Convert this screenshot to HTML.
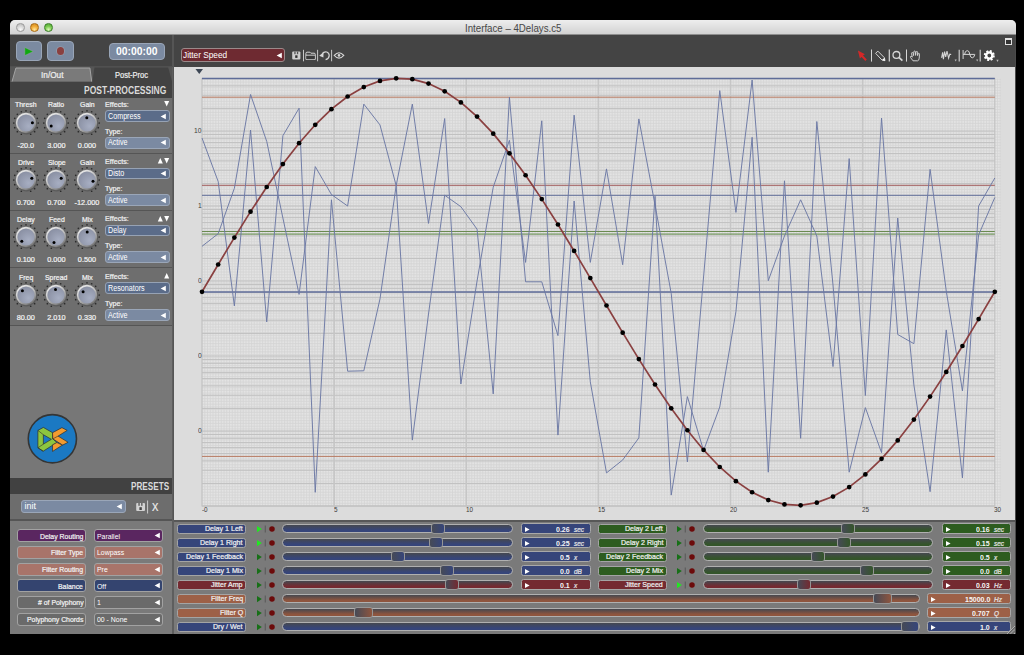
<!DOCTYPE html>
<html><head><meta charset="utf-8">
<style>
*{margin:0;padding:0;box-sizing:border-box}
html,body{width:1024px;height:655px;overflow:hidden;background:#000;font-family:"Liberation Sans", sans-serif}
.a{position:absolute}
.t{position:absolute;white-space:nowrap;line-height:1}
.b{-webkit-text-stroke:0.22px currentColor}
svg{position:absolute;overflow:visible}
</style></head><body>

<div class="a" style="left:10.00px;top:20.00px;width:1006.00px;height:614.00px;background:#7a7a7a;border-radius:5px 5px 0 0"></div>
<div class="a" style="left:10.00px;top:20.00px;width:1006.00px;height:15.00px;background:linear-gradient(#eeeeee,#d0d0d0);border-radius:5px 5px 0 0"></div>
<div class="a" style="left:10.00px;top:34.00px;width:1006.00px;height:1.00px;background:#8e8e8e"></div>
<div class="a" style="left:16.00px;top:23.40px;width:8.80px;height:8.80px;border-radius:50%;border:0.9px solid #9a9a9a;background:radial-gradient(circle at 50% 80%,#fafafa,#d8d8d8 50%,#b8b8b8 100%)"></div>
<div class="a" style="left:30.00px;top:23.40px;width:8.80px;height:8.80px;border-radius:50%;border:0.9px solid #a96a14;background:radial-gradient(circle at 50% 80%,#ffe79a,#f0aa35 50%,#d08a20 100%)"></div>
<div class="a" style="left:44.00px;top:23.40px;width:8.80px;height:8.80px;border-radius:50%;border:0.9px solid #3a7f28;background:radial-gradient(circle at 50% 80%,#dcf8b8,#7acb50 50%,#4fa035 100%)"></div>
<div class="t" style="left:464.70px;top:23.39px;font-size:11px;color:#474747;transform:scaleX(0.881);transform-origin:0 0;">Interface – 4Delays.c5</div>
<div class="a" style="left:10.00px;top:35.00px;width:1006.00px;height:32.00px;background:#444444"></div>
<div class="a" style="left:172.00px;top:35.00px;width:1.50px;height:32.00px;background:#555"></div>
<div class="a" style="left:16.00px;top:41.00px;width:26.00px;height:20.00px;background:#7b8aa1;border:1px solid #99a5b7;border-radius:4px"></div>
<svg style="left:24px;top:46px" width="12" height="11"><polygon points="0.8,1.4 9.2,5.5 0.8,9.6" fill="#10a810" stroke="#95a7a0" stroke-width="0.5"/></svg>
<div class="a" style="left:47.00px;top:41.00px;width:27.00px;height:20.00px;background:#7b8aa1;border:1px solid #99a5b7;border-radius:4px"></div>
<div class="a" style="left:56.60px;top:47.20px;width:7.40px;height:7.40px;background:#8a4040;border-radius:50%;box-shadow:0 0 0 0.6px #9aa2b0"></div>
<div class="a" style="left:109.00px;top:42.50px;width:56.00px;height:17.00px;background:#7b8aa1;border:1px solid #99a5b7;border-radius:4px"></div>
<div class="t" style="left:116.30px;top:46.21px;font-size:10.5px;color:#fff;font-weight:bold;transform:scaleX(0.987);transform-origin:0 0;">00:00:00</div>
<div class="a" style="left:10.00px;top:67.00px;width:163.00px;height:453.00px;background:#777777"></div>
<div class="a" style="left:10.00px;top:66.00px;width:163.00px;height:1.00px;background:#505050"></div>
<div class="a" style="left:10.00px;top:67.00px;width:162.00px;height:15.00px;background:#555555"></div>
<svg style="left:10px;top:67px" width="163" height="16"><polygon points="2,14.6 5.9,1 79.9,1 81.7,14.6" fill="#7a7a7a"/><path d="M2,14.6 5.9,1 79.9,1 81.7,14.6" fill="none" stroke="#a4a4a4" stroke-width="1"/><polygon points="84.5,0.6 158.2,0.6 162.2,15 82.3,15" fill="#424242"/></svg>
<div class="a" style="left:10.00px;top:81.50px;width:162.00px;height:16.00px;background:#424242"></div>
<div class="t b" style="left:40.70px;top:71.05px;font-size:8.8px;color:#eeeeee;transform:scaleX(0.939);transform-origin:0 0;">In/Out</div>
<div class="t b" style="left:115.00px;top:71.05px;font-size:8.8px;color:#eeeeee;transform:scaleX(0.854);transform-origin:0 0;">Post-Proc</div>
<div class="t" style="left:84.20px;top:84.82px;font-size:11.2px;color:#dadada;font-weight:bold;transform:scaleX(0.761);transform-origin:0 0;">POST-PROCESSING</div>
<svg width="0" height="0" style="left:0;top:0"><defs><radialGradient id="kg" cx="0.65" cy="0.68" r="0.8"><stop offset="0" stop-color="#a7aec2"/><stop offset="1" stop-color="#868c9f"/></radialGradient><linearGradient id="kr" x1="0.25" y1="0.1" x2="0.75" y2="0.9"><stop offset="0" stop-color="#e6e6e6"/><stop offset="0.5" stop-color="#bdbdbd"/><stop offset="1" stop-color="#7a7a7a"/></linearGradient></defs></svg>
<div class="a" style="left:10.00px;top:97.50px;width:162.00px;height:55.00px;background:#6e6e6e"></div>
<div class="a" style="left:10.00px;top:152.50px;width:162.00px;height:1.50px;background:#555"></div>
<div class="t b" style="left:15.01px;top:101.22px;font-size:7.3px;color:#f2f2f2;transform:scaleX(0.950);transform-origin:0 0;">Thresh</div>
<svg style="left:11.80px;top:108.60px" width="28" height="28" viewBox="-14 -14 28 28"><circle cx="0.00" cy="-12.20" r="0.85" fill="#2c2c2c"/><circle cx="4.67" cy="-11.27" r="0.85" fill="#2c2c2c"/><circle cx="8.63" cy="-8.63" r="0.85" fill="#2c2c2c"/><circle cx="11.27" cy="-4.67" r="0.85" fill="#2c2c2c"/><circle cx="12.20" cy="-0.00" r="0.85" fill="#2c2c2c"/><circle cx="11.27" cy="4.67" r="0.85" fill="#2c2c2c"/><circle cx="8.63" cy="8.63" r="0.85" fill="#2c2c2c"/><circle cx="4.67" cy="11.27" r="0.85" fill="#2c2c2c"/><circle cx="-4.67" cy="11.27" r="0.85" fill="#2c2c2c"/><circle cx="-8.63" cy="8.63" r="0.85" fill="#2c2c2c"/><circle cx="-11.27" cy="4.67" r="0.85" fill="#2c2c2c"/><circle cx="-12.20" cy="0.00" r="0.85" fill="#2c2c2c"/><circle cx="-11.27" cy="-4.67" r="0.85" fill="#2c2c2c"/><circle cx="-8.63" cy="-8.63" r="0.85" fill="#2c2c2c"/><circle cx="-4.67" cy="-11.27" r="0.85" fill="#2c2c2c"/><circle cx="0.4" cy="0.7" r="10.7" fill="#3a3a3a" opacity="0.35"/><circle cx="0" cy="0" r="10.2" fill="url(#kr)"/><circle cx="0" cy="0" r="8.6" fill="url(#kg)"/><circle cx="6.40" cy="-0.30" r="1.5" fill="#000"/></svg>
<div class="t b" style="left:17.48px;top:141.92px;font-size:7.3px;color:#f2f2f2;">-20.0</div>
<div class="t b" style="left:48.31px;top:101.22px;font-size:7.3px;color:#f2f2f2;transform:scaleX(0.950);transform-origin:0 0;">Ratio</div>
<svg style="left:42.40px;top:108.60px" width="28" height="28" viewBox="-14 -14 28 28"><circle cx="0.00" cy="-12.20" r="0.85" fill="#2c2c2c"/><circle cx="4.67" cy="-11.27" r="0.85" fill="#2c2c2c"/><circle cx="8.63" cy="-8.63" r="0.85" fill="#2c2c2c"/><circle cx="11.27" cy="-4.67" r="0.85" fill="#2c2c2c"/><circle cx="12.20" cy="-0.00" r="0.85" fill="#2c2c2c"/><circle cx="11.27" cy="4.67" r="0.85" fill="#2c2c2c"/><circle cx="8.63" cy="8.63" r="0.85" fill="#2c2c2c"/><circle cx="4.67" cy="11.27" r="0.85" fill="#2c2c2c"/><circle cx="-4.67" cy="11.27" r="0.85" fill="#2c2c2c"/><circle cx="-8.63" cy="8.63" r="0.85" fill="#2c2c2c"/><circle cx="-11.27" cy="4.67" r="0.85" fill="#2c2c2c"/><circle cx="-12.20" cy="0.00" r="0.85" fill="#2c2c2c"/><circle cx="-11.27" cy="-4.67" r="0.85" fill="#2c2c2c"/><circle cx="-8.63" cy="-8.63" r="0.85" fill="#2c2c2c"/><circle cx="-4.67" cy="-11.27" r="0.85" fill="#2c2c2c"/><circle cx="0.4" cy="0.7" r="10.7" fill="#3a3a3a" opacity="0.35"/><circle cx="0" cy="0" r="10.2" fill="url(#kr)"/><circle cx="0" cy="0" r="8.6" fill="url(#kg)"/><circle cx="-4.80" cy="3.00" r="1.5" fill="#000"/></svg>
<div class="t b" style="left:47.27px;top:141.92px;font-size:7.3px;color:#f2f2f2;">3.000</div>
<div class="t b" style="left:79.68px;top:101.22px;font-size:7.3px;color:#f2f2f2;transform:scaleX(0.950);transform-origin:0 0;">Gain</div>
<svg style="left:73.00px;top:108.60px" width="28" height="28" viewBox="-14 -14 28 28"><circle cx="0.00" cy="-12.20" r="0.85" fill="#2c2c2c"/><circle cx="4.67" cy="-11.27" r="0.85" fill="#2c2c2c"/><circle cx="8.63" cy="-8.63" r="0.85" fill="#2c2c2c"/><circle cx="11.27" cy="-4.67" r="0.85" fill="#2c2c2c"/><circle cx="12.20" cy="-0.00" r="0.85" fill="#2c2c2c"/><circle cx="11.27" cy="4.67" r="0.85" fill="#2c2c2c"/><circle cx="8.63" cy="8.63" r="0.85" fill="#2c2c2c"/><circle cx="4.67" cy="11.27" r="0.85" fill="#2c2c2c"/><circle cx="-4.67" cy="11.27" r="0.85" fill="#2c2c2c"/><circle cx="-8.63" cy="8.63" r="0.85" fill="#2c2c2c"/><circle cx="-11.27" cy="4.67" r="0.85" fill="#2c2c2c"/><circle cx="-12.20" cy="0.00" r="0.85" fill="#2c2c2c"/><circle cx="-11.27" cy="-4.67" r="0.85" fill="#2c2c2c"/><circle cx="-8.63" cy="-8.63" r="0.85" fill="#2c2c2c"/><circle cx="-4.67" cy="-11.27" r="0.85" fill="#2c2c2c"/><circle cx="0.4" cy="0.7" r="10.7" fill="#3a3a3a" opacity="0.35"/><circle cx="0" cy="0" r="10.2" fill="url(#kr)"/><circle cx="0" cy="0" r="8.6" fill="url(#kg)"/><circle cx="-0.20" cy="-5.30" r="1.5" fill="#000"/></svg>
<div class="t b" style="left:77.87px;top:141.92px;font-size:7.3px;color:#f2f2f2;">0.000</div>
<div class="t b" style="left:105.20px;top:100.90px;font-size:7.8px;color:#f2f2f2;transform:scaleX(0.920);transform-origin:0 0;">Effects:</div>
<div class="t b" style="left:105.20px;top:127.50px;font-size:7.8px;color:#f2f2f2;transform:scaleX(0.920);transform-origin:0 0;">Type:</div>
<div class="a" style="left:105.20px;top:110.10px;width:64.60px;height:11.80px;background:#5b6c89;border:1px solid #96a2b4;border-radius:3px"></div>
<div class="t" style="left:108.40px;top:111.81px;font-size:9.2px;color:#fff;transform:scaleX(0.780);transform-origin:0 0;">Compress</div>
<svg style="left:160.30px;top:112.50px" width="7" height="7"><polygon points="5.8,0.8 5.8,6.2 0.6,3.5" fill="#fff"/></svg>
<div class="a" style="left:105.20px;top:136.60px;width:64.60px;height:12.20px;background:#7b8aa2;border:1px solid #9aa6b8;border-radius:3px"></div>
<div class="t" style="left:108.40px;top:138.31px;font-size:9.2px;color:#fff;transform:scaleX(0.780);transform-origin:0 0;">Active</div>
<svg style="left:160.30px;top:139.20px" width="7" height="7"><polygon points="5.8,0.8 5.8,6.2 0.6,3.5" fill="#fff"/></svg>
<svg style="left:155px;top:100.00px" width="16" height="8"><polygon points="9.2,1 14.2,1 11.7,6.5" fill="#fff"/></svg>
<div class="a" style="left:10.00px;top:153.50px;width:162.00px;height:56.50px;background:#6e6e6e"></div>
<div class="a" style="left:10.00px;top:210.00px;width:162.00px;height:1.50px;background:#555"></div>
<div class="t b" style="left:17.71px;top:158.62px;font-size:7.3px;color:#f2f2f2;transform:scaleX(0.950);transform-origin:0 0;">Drive</div>
<svg style="left:11.80px;top:166.00px" width="28" height="28" viewBox="-14 -14 28 28"><circle cx="0.00" cy="-12.20" r="0.85" fill="#2c2c2c"/><circle cx="4.67" cy="-11.27" r="0.85" fill="#2c2c2c"/><circle cx="8.63" cy="-8.63" r="0.85" fill="#2c2c2c"/><circle cx="11.27" cy="-4.67" r="0.85" fill="#2c2c2c"/><circle cx="12.20" cy="-0.00" r="0.85" fill="#2c2c2c"/><circle cx="11.27" cy="4.67" r="0.85" fill="#2c2c2c"/><circle cx="8.63" cy="8.63" r="0.85" fill="#2c2c2c"/><circle cx="4.67" cy="11.27" r="0.85" fill="#2c2c2c"/><circle cx="-4.67" cy="11.27" r="0.85" fill="#2c2c2c"/><circle cx="-8.63" cy="8.63" r="0.85" fill="#2c2c2c"/><circle cx="-11.27" cy="4.67" r="0.85" fill="#2c2c2c"/><circle cx="-12.20" cy="0.00" r="0.85" fill="#2c2c2c"/><circle cx="-11.27" cy="-4.67" r="0.85" fill="#2c2c2c"/><circle cx="-8.63" cy="-8.63" r="0.85" fill="#2c2c2c"/><circle cx="-4.67" cy="-11.27" r="0.85" fill="#2c2c2c"/><circle cx="0.4" cy="0.7" r="10.7" fill="#3a3a3a" opacity="0.35"/><circle cx="0" cy="0" r="10.2" fill="url(#kr)"/><circle cx="0" cy="0" r="8.6" fill="url(#kg)"/><circle cx="5.80" cy="-1.70" r="1.5" fill="#000"/></svg>
<div class="t b" style="left:16.67px;top:199.32px;font-size:7.3px;color:#f2f2f2;">0.700</div>
<div class="t b" style="left:47.53px;top:158.62px;font-size:7.3px;color:#f2f2f2;transform:scaleX(0.950);transform-origin:0 0;">Slope</div>
<svg style="left:42.40px;top:166.00px" width="28" height="28" viewBox="-14 -14 28 28"><circle cx="0.00" cy="-12.20" r="0.85" fill="#2c2c2c"/><circle cx="4.67" cy="-11.27" r="0.85" fill="#2c2c2c"/><circle cx="8.63" cy="-8.63" r="0.85" fill="#2c2c2c"/><circle cx="11.27" cy="-4.67" r="0.85" fill="#2c2c2c"/><circle cx="12.20" cy="-0.00" r="0.85" fill="#2c2c2c"/><circle cx="11.27" cy="4.67" r="0.85" fill="#2c2c2c"/><circle cx="8.63" cy="8.63" r="0.85" fill="#2c2c2c"/><circle cx="4.67" cy="11.27" r="0.85" fill="#2c2c2c"/><circle cx="-4.67" cy="11.27" r="0.85" fill="#2c2c2c"/><circle cx="-8.63" cy="8.63" r="0.85" fill="#2c2c2c"/><circle cx="-11.27" cy="4.67" r="0.85" fill="#2c2c2c"/><circle cx="-12.20" cy="0.00" r="0.85" fill="#2c2c2c"/><circle cx="-11.27" cy="-4.67" r="0.85" fill="#2c2c2c"/><circle cx="-8.63" cy="-8.63" r="0.85" fill="#2c2c2c"/><circle cx="-4.67" cy="-11.27" r="0.85" fill="#2c2c2c"/><circle cx="0.4" cy="0.7" r="10.7" fill="#3a3a3a" opacity="0.35"/><circle cx="0" cy="0" r="10.2" fill="url(#kr)"/><circle cx="0" cy="0" r="8.6" fill="url(#kg)"/><circle cx="5.20" cy="-1.70" r="1.5" fill="#000"/></svg>
<div class="t b" style="left:47.27px;top:199.32px;font-size:7.3px;color:#f2f2f2;">0.700</div>
<div class="t b" style="left:79.68px;top:158.62px;font-size:7.3px;color:#f2f2f2;transform:scaleX(0.950);transform-origin:0 0;">Gain</div>
<svg style="left:73.00px;top:166.00px" width="28" height="28" viewBox="-14 -14 28 28"><circle cx="0.00" cy="-12.20" r="0.85" fill="#2c2c2c"/><circle cx="4.67" cy="-11.27" r="0.85" fill="#2c2c2c"/><circle cx="8.63" cy="-8.63" r="0.85" fill="#2c2c2c"/><circle cx="11.27" cy="-4.67" r="0.85" fill="#2c2c2c"/><circle cx="12.20" cy="-0.00" r="0.85" fill="#2c2c2c"/><circle cx="11.27" cy="4.67" r="0.85" fill="#2c2c2c"/><circle cx="8.63" cy="8.63" r="0.85" fill="#2c2c2c"/><circle cx="4.67" cy="11.27" r="0.85" fill="#2c2c2c"/><circle cx="-4.67" cy="11.27" r="0.85" fill="#2c2c2c"/><circle cx="-8.63" cy="8.63" r="0.85" fill="#2c2c2c"/><circle cx="-11.27" cy="4.67" r="0.85" fill="#2c2c2c"/><circle cx="-12.20" cy="0.00" r="0.85" fill="#2c2c2c"/><circle cx="-11.27" cy="-4.67" r="0.85" fill="#2c2c2c"/><circle cx="-8.63" cy="-8.63" r="0.85" fill="#2c2c2c"/><circle cx="-4.67" cy="-11.27" r="0.85" fill="#2c2c2c"/><circle cx="0.4" cy="0.7" r="10.7" fill="#3a3a3a" opacity="0.35"/><circle cx="0" cy="0" r="10.2" fill="url(#kr)"/><circle cx="0" cy="0" r="8.6" fill="url(#kg)"/><circle cx="6.00" cy="1.20" r="1.5" fill="#000"/></svg>
<div class="t b" style="left:74.62px;top:199.32px;font-size:7.3px;color:#f2f2f2;">-12.000</div>
<div class="t b" style="left:105.20px;top:158.30px;font-size:7.8px;color:#f2f2f2;transform:scaleX(0.920);transform-origin:0 0;">Effects:</div>
<div class="t b" style="left:105.20px;top:184.90px;font-size:7.8px;color:#f2f2f2;transform:scaleX(0.920);transform-origin:0 0;">Type:</div>
<div class="a" style="left:105.20px;top:167.50px;width:64.60px;height:11.80px;background:#5b6c89;border:1px solid #96a2b4;border-radius:3px"></div>
<div class="t" style="left:108.40px;top:169.21px;font-size:9.2px;color:#fff;transform:scaleX(0.780);transform-origin:0 0;">Disto</div>
<svg style="left:160.30px;top:169.90px" width="7" height="7"><polygon points="5.8,0.8 5.8,6.2 0.6,3.5" fill="#fff"/></svg>
<div class="a" style="left:105.20px;top:194.00px;width:64.60px;height:12.20px;background:#7b8aa2;border:1px solid #9aa6b8;border-radius:3px"></div>
<div class="t" style="left:108.40px;top:195.71px;font-size:9.2px;color:#fff;transform:scaleX(0.780);transform-origin:0 0;">Active</div>
<svg style="left:160.30px;top:196.60px" width="7" height="7"><polygon points="5.8,0.8 5.8,6.2 0.6,3.5" fill="#fff"/></svg>
<svg style="left:155px;top:157.40px" width="16" height="8"><polygon points="9.2,1 14.2,1 11.7,6.5" fill="#fff"/><polygon points="2.8,6.5 7.8,6.5 5.3,1" fill="#fff"/></svg>
<div class="a" style="left:10.00px;top:211.00px;width:162.00px;height:56.00px;background:#6e6e6e"></div>
<div class="a" style="left:10.00px;top:267.00px;width:162.00px;height:1.50px;background:#555"></div>
<div class="t b" style="left:16.94px;top:215.72px;font-size:7.3px;color:#f2f2f2;transform:scaleX(0.950);transform-origin:0 0;">Delay</div>
<svg style="left:11.80px;top:223.10px" width="28" height="28" viewBox="-14 -14 28 28"><circle cx="0.00" cy="-12.20" r="0.85" fill="#2c2c2c"/><circle cx="4.67" cy="-11.27" r="0.85" fill="#2c2c2c"/><circle cx="8.63" cy="-8.63" r="0.85" fill="#2c2c2c"/><circle cx="11.27" cy="-4.67" r="0.85" fill="#2c2c2c"/><circle cx="12.20" cy="-0.00" r="0.85" fill="#2c2c2c"/><circle cx="11.27" cy="4.67" r="0.85" fill="#2c2c2c"/><circle cx="8.63" cy="8.63" r="0.85" fill="#2c2c2c"/><circle cx="4.67" cy="11.27" r="0.85" fill="#2c2c2c"/><circle cx="-4.67" cy="11.27" r="0.85" fill="#2c2c2c"/><circle cx="-8.63" cy="8.63" r="0.85" fill="#2c2c2c"/><circle cx="-11.27" cy="4.67" r="0.85" fill="#2c2c2c"/><circle cx="-12.20" cy="0.00" r="0.85" fill="#2c2c2c"/><circle cx="-11.27" cy="-4.67" r="0.85" fill="#2c2c2c"/><circle cx="-8.63" cy="-8.63" r="0.85" fill="#2c2c2c"/><circle cx="-4.67" cy="-11.27" r="0.85" fill="#2c2c2c"/><circle cx="0.4" cy="0.7" r="10.7" fill="#3a3a3a" opacity="0.35"/><circle cx="0" cy="0" r="10.2" fill="url(#kr)"/><circle cx="0" cy="0" r="8.6" fill="url(#kg)"/><circle cx="-4.20" cy="4.20" r="1.5" fill="#000"/></svg>
<div class="t b" style="left:16.67px;top:256.42px;font-size:7.3px;color:#f2f2f2;">0.100</div>
<div class="t b" style="left:48.50px;top:215.72px;font-size:7.3px;color:#f2f2f2;transform:scaleX(0.950);transform-origin:0 0;">Feed</div>
<svg style="left:42.40px;top:223.10px" width="28" height="28" viewBox="-14 -14 28 28"><circle cx="0.00" cy="-12.20" r="0.85" fill="#2c2c2c"/><circle cx="4.67" cy="-11.27" r="0.85" fill="#2c2c2c"/><circle cx="8.63" cy="-8.63" r="0.85" fill="#2c2c2c"/><circle cx="11.27" cy="-4.67" r="0.85" fill="#2c2c2c"/><circle cx="12.20" cy="-0.00" r="0.85" fill="#2c2c2c"/><circle cx="11.27" cy="4.67" r="0.85" fill="#2c2c2c"/><circle cx="8.63" cy="8.63" r="0.85" fill="#2c2c2c"/><circle cx="4.67" cy="11.27" r="0.85" fill="#2c2c2c"/><circle cx="-4.67" cy="11.27" r="0.85" fill="#2c2c2c"/><circle cx="-8.63" cy="8.63" r="0.85" fill="#2c2c2c"/><circle cx="-11.27" cy="4.67" r="0.85" fill="#2c2c2c"/><circle cx="-12.20" cy="0.00" r="0.85" fill="#2c2c2c"/><circle cx="-11.27" cy="-4.67" r="0.85" fill="#2c2c2c"/><circle cx="-8.63" cy="-8.63" r="0.85" fill="#2c2c2c"/><circle cx="-4.67" cy="-11.27" r="0.85" fill="#2c2c2c"/><circle cx="0.4" cy="0.7" r="10.7" fill="#3a3a3a" opacity="0.35"/><circle cx="0" cy="0" r="10.2" fill="url(#kr)"/><circle cx="0" cy="0" r="8.6" fill="url(#kg)"/><circle cx="-2.00" cy="5.60" r="1.5" fill="#000"/></svg>
<div class="t b" style="left:47.27px;top:256.42px;font-size:7.3px;color:#f2f2f2;">0.000</div>
<div class="t b" style="left:81.61px;top:215.72px;font-size:7.3px;color:#f2f2f2;transform:scaleX(0.950);transform-origin:0 0;">Mix</div>
<svg style="left:73.00px;top:223.10px" width="28" height="28" viewBox="-14 -14 28 28"><circle cx="0.00" cy="-12.20" r="0.85" fill="#2c2c2c"/><circle cx="4.67" cy="-11.27" r="0.85" fill="#2c2c2c"/><circle cx="8.63" cy="-8.63" r="0.85" fill="#2c2c2c"/><circle cx="11.27" cy="-4.67" r="0.85" fill="#2c2c2c"/><circle cx="12.20" cy="-0.00" r="0.85" fill="#2c2c2c"/><circle cx="11.27" cy="4.67" r="0.85" fill="#2c2c2c"/><circle cx="8.63" cy="8.63" r="0.85" fill="#2c2c2c"/><circle cx="4.67" cy="11.27" r="0.85" fill="#2c2c2c"/><circle cx="-4.67" cy="11.27" r="0.85" fill="#2c2c2c"/><circle cx="-8.63" cy="8.63" r="0.85" fill="#2c2c2c"/><circle cx="-11.27" cy="4.67" r="0.85" fill="#2c2c2c"/><circle cx="-12.20" cy="0.00" r="0.85" fill="#2c2c2c"/><circle cx="-11.27" cy="-4.67" r="0.85" fill="#2c2c2c"/><circle cx="-8.63" cy="-8.63" r="0.85" fill="#2c2c2c"/><circle cx="-4.67" cy="-11.27" r="0.85" fill="#2c2c2c"/><circle cx="0.4" cy="0.7" r="10.7" fill="#3a3a3a" opacity="0.35"/><circle cx="0" cy="0" r="10.2" fill="url(#kr)"/><circle cx="0" cy="0" r="8.6" fill="url(#kg)"/><circle cx="0.20" cy="-5.10" r="1.5" fill="#000"/></svg>
<div class="t b" style="left:77.87px;top:256.42px;font-size:7.3px;color:#f2f2f2;">0.500</div>
<div class="t b" style="left:105.20px;top:215.40px;font-size:7.8px;color:#f2f2f2;transform:scaleX(0.920);transform-origin:0 0;">Effects:</div>
<div class="t b" style="left:105.20px;top:242.00px;font-size:7.8px;color:#f2f2f2;transform:scaleX(0.920);transform-origin:0 0;">Type:</div>
<div class="a" style="left:105.20px;top:224.60px;width:64.60px;height:11.80px;background:#5b6c89;border:1px solid #96a2b4;border-radius:3px"></div>
<div class="t" style="left:108.40px;top:226.31px;font-size:9.2px;color:#fff;transform:scaleX(0.780);transform-origin:0 0;">Delay</div>
<svg style="left:160.30px;top:227.00px" width="7" height="7"><polygon points="5.8,0.8 5.8,6.2 0.6,3.5" fill="#fff"/></svg>
<div class="a" style="left:105.20px;top:251.10px;width:64.60px;height:12.20px;background:#7b8aa2;border:1px solid #9aa6b8;border-radius:3px"></div>
<div class="t" style="left:108.40px;top:252.81px;font-size:9.2px;color:#fff;transform:scaleX(0.780);transform-origin:0 0;">Active</div>
<svg style="left:160.30px;top:253.70px" width="7" height="7"><polygon points="5.8,0.8 5.8,6.2 0.6,3.5" fill="#fff"/></svg>
<svg style="left:155px;top:214.50px" width="16" height="8"><polygon points="9.2,1 14.2,1 11.7,6.5" fill="#fff"/><polygon points="2.8,6.5 7.8,6.5 5.3,1" fill="#fff"/></svg>
<div class="a" style="left:10.00px;top:268.00px;width:162.00px;height:56.50px;background:#6e6e6e"></div>
<div class="a" style="left:10.00px;top:324.50px;width:162.00px;height:1.50px;background:#555"></div>
<div class="t b" style="left:18.67px;top:273.52px;font-size:7.3px;color:#f2f2f2;transform:scaleX(0.950);transform-origin:0 0;">Freq</div>
<svg style="left:11.80px;top:280.90px" width="28" height="28" viewBox="-14 -14 28 28"><circle cx="0.00" cy="-12.20" r="0.85" fill="#2c2c2c"/><circle cx="4.67" cy="-11.27" r="0.85" fill="#2c2c2c"/><circle cx="8.63" cy="-8.63" r="0.85" fill="#2c2c2c"/><circle cx="11.27" cy="-4.67" r="0.85" fill="#2c2c2c"/><circle cx="12.20" cy="-0.00" r="0.85" fill="#2c2c2c"/><circle cx="11.27" cy="4.67" r="0.85" fill="#2c2c2c"/><circle cx="8.63" cy="8.63" r="0.85" fill="#2c2c2c"/><circle cx="4.67" cy="11.27" r="0.85" fill="#2c2c2c"/><circle cx="-4.67" cy="11.27" r="0.85" fill="#2c2c2c"/><circle cx="-8.63" cy="8.63" r="0.85" fill="#2c2c2c"/><circle cx="-11.27" cy="4.67" r="0.85" fill="#2c2c2c"/><circle cx="-12.20" cy="0.00" r="0.85" fill="#2c2c2c"/><circle cx="-11.27" cy="-4.67" r="0.85" fill="#2c2c2c"/><circle cx="-8.63" cy="-8.63" r="0.85" fill="#2c2c2c"/><circle cx="-4.67" cy="-11.27" r="0.85" fill="#2c2c2c"/><circle cx="0.4" cy="0.7" r="10.7" fill="#3a3a3a" opacity="0.35"/><circle cx="0" cy="0" r="10.2" fill="url(#kr)"/><circle cx="0" cy="0" r="8.6" fill="url(#kg)"/><circle cx="-3.60" cy="-4.20" r="1.5" fill="#000"/></svg>
<div class="t b" style="left:16.67px;top:314.22px;font-size:7.3px;color:#f2f2f2;">80.00</div>
<div class="t b" style="left:45.22px;top:273.52px;font-size:7.3px;color:#f2f2f2;transform:scaleX(0.950);transform-origin:0 0;">Spread</div>
<svg style="left:42.40px;top:280.90px" width="28" height="28" viewBox="-14 -14 28 28"><circle cx="0.00" cy="-12.20" r="0.85" fill="#2c2c2c"/><circle cx="4.67" cy="-11.27" r="0.85" fill="#2c2c2c"/><circle cx="8.63" cy="-8.63" r="0.85" fill="#2c2c2c"/><circle cx="11.27" cy="-4.67" r="0.85" fill="#2c2c2c"/><circle cx="12.20" cy="-0.00" r="0.85" fill="#2c2c2c"/><circle cx="11.27" cy="4.67" r="0.85" fill="#2c2c2c"/><circle cx="8.63" cy="8.63" r="0.85" fill="#2c2c2c"/><circle cx="4.67" cy="11.27" r="0.85" fill="#2c2c2c"/><circle cx="-4.67" cy="11.27" r="0.85" fill="#2c2c2c"/><circle cx="-8.63" cy="8.63" r="0.85" fill="#2c2c2c"/><circle cx="-11.27" cy="4.67" r="0.85" fill="#2c2c2c"/><circle cx="-12.20" cy="0.00" r="0.85" fill="#2c2c2c"/><circle cx="-11.27" cy="-4.67" r="0.85" fill="#2c2c2c"/><circle cx="-8.63" cy="-8.63" r="0.85" fill="#2c2c2c"/><circle cx="-4.67" cy="-11.27" r="0.85" fill="#2c2c2c"/><circle cx="0.4" cy="0.7" r="10.7" fill="#3a3a3a" opacity="0.35"/><circle cx="0" cy="0" r="10.2" fill="url(#kr)"/><circle cx="0" cy="0" r="8.6" fill="url(#kg)"/><circle cx="-0.50" cy="-5.50" r="1.5" fill="#000"/></svg>
<div class="t b" style="left:47.27px;top:314.22px;font-size:7.3px;color:#f2f2f2;">2.010</div>
<div class="t b" style="left:81.61px;top:273.52px;font-size:7.3px;color:#f2f2f2;transform:scaleX(0.950);transform-origin:0 0;">Mix</div>
<svg style="left:73.00px;top:280.90px" width="28" height="28" viewBox="-14 -14 28 28"><circle cx="0.00" cy="-12.20" r="0.85" fill="#2c2c2c"/><circle cx="4.67" cy="-11.27" r="0.85" fill="#2c2c2c"/><circle cx="8.63" cy="-8.63" r="0.85" fill="#2c2c2c"/><circle cx="11.27" cy="-4.67" r="0.85" fill="#2c2c2c"/><circle cx="12.20" cy="-0.00" r="0.85" fill="#2c2c2c"/><circle cx="11.27" cy="4.67" r="0.85" fill="#2c2c2c"/><circle cx="8.63" cy="8.63" r="0.85" fill="#2c2c2c"/><circle cx="4.67" cy="11.27" r="0.85" fill="#2c2c2c"/><circle cx="-4.67" cy="11.27" r="0.85" fill="#2c2c2c"/><circle cx="-8.63" cy="8.63" r="0.85" fill="#2c2c2c"/><circle cx="-11.27" cy="4.67" r="0.85" fill="#2c2c2c"/><circle cx="-12.20" cy="0.00" r="0.85" fill="#2c2c2c"/><circle cx="-11.27" cy="-4.67" r="0.85" fill="#2c2c2c"/><circle cx="-8.63" cy="-8.63" r="0.85" fill="#2c2c2c"/><circle cx="-4.67" cy="-11.27" r="0.85" fill="#2c2c2c"/><circle cx="0.4" cy="0.7" r="10.7" fill="#3a3a3a" opacity="0.35"/><circle cx="0" cy="0" r="10.2" fill="url(#kr)"/><circle cx="0" cy="0" r="8.6" fill="url(#kg)"/><circle cx="-3.90" cy="-3.30" r="1.5" fill="#000"/></svg>
<div class="t b" style="left:77.87px;top:314.22px;font-size:7.3px;color:#f2f2f2;">0.330</div>
<div class="t b" style="left:105.20px;top:273.20px;font-size:7.8px;color:#f2f2f2;transform:scaleX(0.920);transform-origin:0 0;">Effects:</div>
<div class="t b" style="left:105.20px;top:299.80px;font-size:7.8px;color:#f2f2f2;transform:scaleX(0.920);transform-origin:0 0;">Type:</div>
<div class="a" style="left:105.20px;top:282.40px;width:64.60px;height:11.80px;background:#5b6c89;border:1px solid #96a2b4;border-radius:3px"></div>
<div class="t" style="left:108.40px;top:284.11px;font-size:9.2px;color:#fff;transform:scaleX(0.780);transform-origin:0 0;">Resonators</div>
<svg style="left:160.30px;top:284.80px" width="7" height="7"><polygon points="5.8,0.8 5.8,6.2 0.6,3.5" fill="#fff"/></svg>
<div class="a" style="left:105.20px;top:308.90px;width:64.60px;height:12.20px;background:#7b8aa2;border:1px solid #9aa6b8;border-radius:3px"></div>
<div class="t" style="left:108.40px;top:310.61px;font-size:9.2px;color:#fff;transform:scaleX(0.780);transform-origin:0 0;">Active</div>
<svg style="left:160.30px;top:311.50px" width="7" height="7"><polygon points="5.8,0.8 5.8,6.2 0.6,3.5" fill="#fff"/></svg>
<svg style="left:155px;top:272.30px" width="16" height="8"><polygon points="9.2,6.5 14.2,6.5 11.7,1" fill="#fff"/></svg>
<svg style="left:20px;top:405px" width="70" height="65" viewBox="0 0 705 655">
<circle cx="326" cy="340" r="243" fill="#1b79c3" stroke="#353535" stroke-width="16"/>
<path fill-rule="evenodd" d="M180.2,255.9 235.5,225.9 327.7,278.9 327.7,338.9 371.6,378.1 233.2,465.6 180.2,431.1z M235.5,299.7 235.5,394.2 316.2,345.8z" fill="#8dc63f" stroke="#2d2d2d" stroke-width="7" stroke-linejoin="round"/>
<path d="M180.2,255.9 235.5,299.7 M180.2,431.1 235.5,394.2 M233.2,465.6 180.2,431.1" stroke="#2d2d2d" stroke-width="6"/>
<path d="M327.7,278.9 422.3,228.2 475.3,255.9 383.4,313.5 484.5,375.7 429.2,404.3 330,341.2z" fill="#f39b30" stroke="#2d2d2d" stroke-width="7" stroke-linejoin="round"/>
<path d="M330,341.2 383.4,313.5" stroke="#2d2d2d" stroke-width="6"/>
<path d="M327.7,401.1 371.6,378.1 426.9,404.3 327.7,468z" fill="#f39b30" stroke="#2d2d2d" stroke-width="7" stroke-linejoin="round"/>
</svg>
<div class="a" style="left:10.00px;top:478.30px;width:162.00px;height:15.50px;background:#414141"></div>
<div class="t" style="left:131.30px;top:482.07px;font-size:10.2px;color:#dadada;font-weight:bold;transform:scaleX(0.802);transform-origin:0 0;">PRESETS</div>
<div class="a" style="left:10.00px;top:493.80px;width:162.00px;height:25.50px;background:#6d6d6d"></div>
<div class="a" style="left:21.30px;top:499.60px;width:104.50px;height:13.60px;background:#7b8aa2;border:1px solid #9aa6b8;border-radius:3px"></div>
<div class="t" style="left:24.50px;top:501.68px;font-size:9px;color:#fff;">init</div>
<svg style="left:116.30px;top:502.90px" width="7" height="7"><polygon points="5.8,0.8 5.8,6.2 0.6,3.5" fill="#fff"/></svg>
<svg style="left:134px;top:501px" width="26" height="14"><rect x="2.2" y="2" width="8.8" height="8" rx="1" fill="#d2d2d2"/><rect x="4.4" y="2" width="1.3" height="2.8" fill="#555"/><rect x="7.2" y="2" width="1.3" height="2.8" fill="#555"/><rect x="5.4" y="6.2" width="2.4" height="2.8" fill="#444"/><line x1="13.6" y1="-0.5" x2="13.6" y2="12.5" stroke="#d8d8d8" stroke-width="0.9"/></svg>
<div class="t b" style="left:151.53px;top:502.84px;font-size:10px;color:#f0f0f0;transform:scaleX(0.950);transform-origin:0 0;">X</div>
<div class="a" style="left:10.00px;top:519.30px;width:162.00px;height:2.00px;background:#555"></div>
<div class="a" style="left:17.40px;top:529.30px;width:68.80px;height:13.10px;background:#5a2660;border:1.2px solid #a2a2a2;border-radius:3px"></div>
<div class="t b" style="left:39.86px;top:532.55px;font-size:7.5px;color:#f2f2f2;transform:scaleX(0.920);transform-origin:0 0;">Delay Routing</div>
<div class="a" style="left:94.20px;top:529.30px;width:69.00px;height:13.10px;background:#5a2660;border:1px solid #a2a2a2;border-radius:3px"></div>
<div class="t" style="left:97.30px;top:532.55px;font-size:7.5px;color:#fff;transform:scaleX(0.920);transform-origin:0 0;">Parallel</div>
<svg style="left:153.70px;top:532.35px" width="7" height="7"><polygon points="5.8,0.8 5.8,6.2 0.6,3.5" fill="#fff"/></svg>
<div class="a" style="left:17.40px;top:546.00px;width:68.80px;height:13.10px;background:#a8746a;border:1.2px solid #a2a2a2;border-radius:3px"></div>
<div class="t b" style="left:51.12px;top:549.25px;font-size:7.5px;color:#f2f2f2;transform:scaleX(0.920);transform-origin:0 0;">Filter Type</div>
<div class="a" style="left:94.20px;top:546.00px;width:69.00px;height:13.10px;background:#a8746a;border:1px solid #a2a2a2;border-radius:3px"></div>
<div class="t" style="left:97.30px;top:549.25px;font-size:7.5px;color:#fff;transform:scaleX(0.920);transform-origin:0 0;">Lowpass</div>
<svg style="left:153.70px;top:549.05px" width="7" height="7"><polygon points="5.8,0.8 5.8,6.2 0.6,3.5" fill="#fff"/></svg>
<div class="a" style="left:17.40px;top:562.70px;width:68.80px;height:13.10px;background:#a8746a;border:1.2px solid #a2a2a2;border-radius:3px"></div>
<div class="t b" style="left:42.17px;top:565.95px;font-size:7.5px;color:#f2f2f2;transform:scaleX(0.920);transform-origin:0 0;">Filter Routing</div>
<div class="a" style="left:94.20px;top:562.70px;width:69.00px;height:13.10px;background:#a8746a;border:1px solid #a2a2a2;border-radius:3px"></div>
<div class="t" style="left:97.30px;top:565.95px;font-size:7.5px;color:#fff;transform:scaleX(0.920);transform-origin:0 0;">Pre</div>
<svg style="left:153.70px;top:565.75px" width="7" height="7"><polygon points="5.8,0.8 5.8,6.2 0.6,3.5" fill="#fff"/></svg>
<div class="a" style="left:17.40px;top:579.40px;width:68.80px;height:13.10px;background:#34446f;border:1.2px solid #a2a2a2;border-radius:3px"></div>
<div class="t b" style="left:58.27px;top:582.65px;font-size:7.5px;color:#f2f2f2;transform:scaleX(0.920);transform-origin:0 0;">Balance</div>
<div class="a" style="left:94.20px;top:579.40px;width:69.00px;height:13.10px;background:#34446f;border:1px solid #a2a2a2;border-radius:3px"></div>
<div class="t" style="left:97.30px;top:582.65px;font-size:7.5px;color:#fff;transform:scaleX(0.920);transform-origin:0 0;">Off</div>
<svg style="left:153.70px;top:582.45px" width="7" height="7"><polygon points="5.8,0.8 5.8,6.2 0.6,3.5" fill="#fff"/></svg>
<div class="a" style="left:17.40px;top:596.10px;width:68.80px;height:13.10px;background:#6a6a6a;border:1.2px solid #a2a2a2;border-radius:3px"></div>
<div class="t b" style="left:37.55px;top:599.35px;font-size:7.5px;color:#f2f2f2;transform:scaleX(0.920);transform-origin:0 0;"># of Polyphony</div>
<div class="a" style="left:94.20px;top:596.10px;width:69.00px;height:13.10px;background:#6a6a6a;border:1px solid #a2a2a2;border-radius:3px"></div>
<div class="t" style="left:97.30px;top:599.35px;font-size:7.5px;color:#fff;transform:scaleX(0.920);transform-origin:0 0;">1</div>
<svg style="left:153.70px;top:599.15px" width="7" height="7"><polygon points="5.8,0.8 5.8,6.2 0.6,3.5" fill="#fff"/></svg>
<div class="a" style="left:17.40px;top:612.80px;width:68.80px;height:13.10px;background:#6a6a6a;border:1.2px solid #a2a2a2;border-radius:3px"></div>
<div class="t b" style="left:26.82px;top:616.05px;font-size:7.5px;color:#f2f2f2;transform:scaleX(0.920);transform-origin:0 0;">Polyphony Chords</div>
<div class="a" style="left:94.20px;top:612.80px;width:69.00px;height:13.10px;background:#6a6a6a;border:1px solid #a2a2a2;border-radius:3px"></div>
<div class="t" style="left:97.30px;top:616.05px;font-size:7.5px;color:#fff;transform:scaleX(0.920);transform-origin:0 0;">00 - None</div>
<svg style="left:153.70px;top:615.85px" width="7" height="7"><polygon points="5.8,0.8 5.8,6.2 0.6,3.5" fill="#fff"/></svg>
<div class="a" style="left:172.00px;top:67.00px;width:1.00px;height:453.00px;background:#5e5e5e"></div>
<div class="a" style="left:173.00px;top:67.00px;width:1.00px;height:453.00px;background:#555"></div>
<div class="a" style="left:174.00px;top:67.00px;width:842.00px;height:453.00px;background:#dcdcdc"></div>
<svg style="left:0;top:0" width="1024" height="655"><rect x="202.0" y="78.5" width="799.0" height="427.5" fill="#e3e3e3"/><path d="M202.00 78.5V506.0M204.75 78.5V506.0M207.51 78.5V506.0M210.26 78.5V506.0M213.01 78.5V506.0M215.76 78.5V506.0M218.52 78.5V506.0M221.27 78.5V506.0M224.02 78.5V506.0M226.77 78.5V506.0M229.53 78.5V506.0M232.28 78.5V506.0M235.03 78.5V506.0M237.79 78.5V506.0M240.54 78.5V506.0M243.29 78.5V506.0M246.04 78.5V506.0M248.80 78.5V506.0M251.55 78.5V506.0M254.30 78.5V506.0M257.05 78.5V506.0M259.81 78.5V506.0M262.56 78.5V506.0M265.31 78.5V506.0M268.07 78.5V506.0M270.82 78.5V506.0M273.57 78.5V506.0M276.32 78.5V506.0M279.08 78.5V506.0M281.83 78.5V506.0M284.58 78.5V506.0M287.33 78.5V506.0M290.09 78.5V506.0M292.84 78.5V506.0M295.59 78.5V506.0M298.34 78.5V506.0M301.10 78.5V506.0M303.85 78.5V506.0M306.60 78.5V506.0M309.36 78.5V506.0M312.11 78.5V506.0M314.86 78.5V506.0M317.61 78.5V506.0M320.37 78.5V506.0M323.12 78.5V506.0M325.87 78.5V506.0M328.62 78.5V506.0M331.38 78.5V506.0M334.13 78.5V506.0M336.88 78.5V506.0M339.64 78.5V506.0M342.39 78.5V506.0M345.14 78.5V506.0M347.89 78.5V506.0M350.65 78.5V506.0M353.40 78.5V506.0M356.15 78.5V506.0M358.90 78.5V506.0M361.66 78.5V506.0M364.41 78.5V506.0M367.16 78.5V506.0M369.92 78.5V506.0M372.67 78.5V506.0M375.42 78.5V506.0M378.17 78.5V506.0M380.93 78.5V506.0M383.68 78.5V506.0M386.43 78.5V506.0M389.18 78.5V506.0M391.94 78.5V506.0M394.69 78.5V506.0M397.44 78.5V506.0M400.19 78.5V506.0M402.95 78.5V506.0M405.70 78.5V506.0M408.45 78.5V506.0M411.21 78.5V506.0M413.96 78.5V506.0M416.71 78.5V506.0M419.46 78.5V506.0M422.22 78.5V506.0M424.97 78.5V506.0M427.72 78.5V506.0M430.47 78.5V506.0M433.23 78.5V506.0M435.98 78.5V506.0M438.73 78.5V506.0M441.49 78.5V506.0M444.24 78.5V506.0M446.99 78.5V506.0M449.74 78.5V506.0M452.50 78.5V506.0M455.25 78.5V506.0M458.00 78.5V506.0M460.75 78.5V506.0M463.51 78.5V506.0M466.26 78.5V506.0M469.01 78.5V506.0M471.77 78.5V506.0M474.52 78.5V506.0M477.27 78.5V506.0M480.02 78.5V506.0M482.78 78.5V506.0M485.53 78.5V506.0M488.28 78.5V506.0M491.03 78.5V506.0M493.79 78.5V506.0M496.54 78.5V506.0M499.29 78.5V506.0M502.05 78.5V506.0M504.80 78.5V506.0M507.55 78.5V506.0M510.30 78.5V506.0M513.06 78.5V506.0M515.81 78.5V506.0M518.56 78.5V506.0M521.31 78.5V506.0M524.07 78.5V506.0M526.82 78.5V506.0M529.57 78.5V506.0M532.32 78.5V506.0M535.08 78.5V506.0M537.83 78.5V506.0M540.58 78.5V506.0M543.34 78.5V506.0M546.09 78.5V506.0M548.84 78.5V506.0M551.59 78.5V506.0M554.35 78.5V506.0M557.10 78.5V506.0M559.85 78.5V506.0M562.60 78.5V506.0M565.36 78.5V506.0M568.11 78.5V506.0M570.86 78.5V506.0M573.62 78.5V506.0M576.37 78.5V506.0M579.12 78.5V506.0M581.87 78.5V506.0M584.63 78.5V506.0M587.38 78.5V506.0M590.13 78.5V506.0M592.88 78.5V506.0M595.64 78.5V506.0M598.39 78.5V506.0M601.14 78.5V506.0M603.90 78.5V506.0M606.65 78.5V506.0M609.40 78.5V506.0M612.15 78.5V506.0M614.91 78.5V506.0M617.66 78.5V506.0M620.41 78.5V506.0M623.16 78.5V506.0M625.92 78.5V506.0M628.67 78.5V506.0M631.42 78.5V506.0M634.18 78.5V506.0M636.93 78.5V506.0M639.68 78.5V506.0M642.43 78.5V506.0M645.19 78.5V506.0M647.94 78.5V506.0M650.69 78.5V506.0M653.44 78.5V506.0M656.20 78.5V506.0M658.95 78.5V506.0M661.70 78.5V506.0M664.45 78.5V506.0M667.21 78.5V506.0M669.96 78.5V506.0M672.71 78.5V506.0M675.47 78.5V506.0M678.22 78.5V506.0M680.97 78.5V506.0M683.72 78.5V506.0M686.48 78.5V506.0M689.23 78.5V506.0M691.98 78.5V506.0M694.73 78.5V506.0M697.49 78.5V506.0M700.24 78.5V506.0M702.99 78.5V506.0M705.75 78.5V506.0M708.50 78.5V506.0M711.25 78.5V506.0M714.00 78.5V506.0M716.76 78.5V506.0M719.51 78.5V506.0M722.26 78.5V506.0M725.01 78.5V506.0M727.77 78.5V506.0M730.52 78.5V506.0M733.27 78.5V506.0M736.03 78.5V506.0M738.78 78.5V506.0M741.53 78.5V506.0M744.28 78.5V506.0M747.04 78.5V506.0M749.79 78.5V506.0M752.54 78.5V506.0M755.29 78.5V506.0M758.05 78.5V506.0M760.80 78.5V506.0M763.55 78.5V506.0M766.31 78.5V506.0M769.06 78.5V506.0M771.81 78.5V506.0M774.56 78.5V506.0M777.32 78.5V506.0M780.07 78.5V506.0M782.82 78.5V506.0M785.57 78.5V506.0M788.33 78.5V506.0M791.08 78.5V506.0M793.83 78.5V506.0M796.58 78.5V506.0M799.34 78.5V506.0M802.09 78.5V506.0M804.84 78.5V506.0M807.60 78.5V506.0M810.35 78.5V506.0M813.10 78.5V506.0M815.85 78.5V506.0M818.61 78.5V506.0M821.36 78.5V506.0M824.11 78.5V506.0M826.86 78.5V506.0M829.62 78.5V506.0M832.37 78.5V506.0M835.12 78.5V506.0M837.88 78.5V506.0M840.63 78.5V506.0M843.38 78.5V506.0M846.13 78.5V506.0M848.89 78.5V506.0M851.64 78.5V506.0M854.39 78.5V506.0M857.14 78.5V506.0M859.90 78.5V506.0M862.65 78.5V506.0M865.40 78.5V506.0M868.16 78.5V506.0M870.91 78.5V506.0M873.66 78.5V506.0M876.41 78.5V506.0M879.17 78.5V506.0M881.92 78.5V506.0M884.67 78.5V506.0M887.42 78.5V506.0M890.18 78.5V506.0M892.93 78.5V506.0M895.68 78.5V506.0M898.44 78.5V506.0M901.19 78.5V506.0M903.94 78.5V506.0M906.69 78.5V506.0M909.45 78.5V506.0M912.20 78.5V506.0M914.95 78.5V506.0M917.70 78.5V506.0M920.46 78.5V506.0M923.21 78.5V506.0M925.96 78.5V506.0M928.71 78.5V506.0M931.47 78.5V506.0M934.22 78.5V506.0M936.97 78.5V506.0M939.73 78.5V506.0M942.48 78.5V506.0M945.23 78.5V506.0M947.98 78.5V506.0M950.74 78.5V506.0M953.49 78.5V506.0M956.24 78.5V506.0M958.99 78.5V506.0M961.75 78.5V506.0M964.50 78.5V506.0M967.25 78.5V506.0M970.01 78.5V506.0M972.76 78.5V506.0M975.51 78.5V506.0M978.26 78.5V506.0M981.02 78.5V506.0M983.77 78.5V506.0M986.52 78.5V506.0M989.27 78.5V506.0M992.03 78.5V506.0M994.78 78.5V506.0M997.53 78.5V506.0M1000.29 78.5V506.0M202.0 506.00H1001M202.0 503.25H1001M202.0 500.49H1001M202.0 497.74H1001M202.0 494.99H1001M202.0 492.24H1001M202.0 489.48H1001M202.0 486.73H1001M202.0 483.98H1001M202.0 481.23H1001M202.0 478.47H1001M202.0 475.72H1001M202.0 472.97H1001M202.0 470.21H1001M202.0 467.46H1001M202.0 464.71H1001M202.0 461.96H1001M202.0 459.20H1001M202.0 456.45H1001M202.0 453.70H1001M202.0 450.95H1001M202.0 448.19H1001M202.0 445.44H1001M202.0 442.69H1001M202.0 439.94H1001M202.0 437.18H1001M202.0 434.43H1001M202.0 431.68H1001M202.0 428.92H1001M202.0 426.17H1001M202.0 423.42H1001M202.0 420.67H1001M202.0 417.91H1001M202.0 415.16H1001M202.0 412.41H1001M202.0 409.66H1001M202.0 406.90H1001M202.0 404.15H1001M202.0 401.40H1001M202.0 398.64H1001M202.0 395.89H1001M202.0 393.14H1001M202.0 390.39H1001M202.0 387.63H1001M202.0 384.88H1001M202.0 382.13H1001M202.0 379.38H1001M202.0 376.62H1001M202.0 373.87H1001M202.0 371.12H1001M202.0 368.36H1001M202.0 365.61H1001M202.0 362.86H1001M202.0 360.11H1001M202.0 357.35H1001M202.0 354.60H1001M202.0 351.85H1001M202.0 349.10H1001M202.0 346.34H1001M202.0 343.59H1001M202.0 340.84H1001M202.0 338.08H1001M202.0 335.33H1001M202.0 332.58H1001M202.0 329.83H1001M202.0 327.07H1001M202.0 324.32H1001M202.0 321.57H1001M202.0 318.82H1001M202.0 316.06H1001M202.0 313.31H1001M202.0 310.56H1001M202.0 307.81H1001M202.0 305.05H1001M202.0 302.30H1001M202.0 299.55H1001M202.0 296.79H1001M202.0 294.04H1001M202.0 291.29H1001M202.0 288.54H1001M202.0 285.78H1001M202.0 283.03H1001M202.0 280.28H1001M202.0 277.53H1001M202.0 274.77H1001M202.0 272.02H1001M202.0 269.27H1001M202.0 266.51H1001M202.0 263.76H1001M202.0 261.01H1001M202.0 258.26H1001M202.0 255.50H1001M202.0 252.75H1001M202.0 250.00H1001M202.0 247.25H1001M202.0 244.49H1001M202.0 241.74H1001M202.0 238.99H1001M202.0 236.23H1001M202.0 233.48H1001M202.0 230.73H1001M202.0 227.98H1001M202.0 225.22H1001M202.0 222.47H1001M202.0 219.72H1001M202.0 216.97H1001M202.0 214.21H1001M202.0 211.46H1001M202.0 208.71H1001M202.0 205.95H1001M202.0 203.20H1001M202.0 200.45H1001M202.0 197.70H1001M202.0 194.94H1001M202.0 192.19H1001M202.0 189.44H1001M202.0 186.69H1001M202.0 183.93H1001M202.0 181.18H1001M202.0 178.43H1001M202.0 175.68H1001M202.0 172.92H1001M202.0 170.17H1001M202.0 167.42H1001M202.0 164.66H1001M202.0 161.91H1001M202.0 159.16H1001M202.0 156.41H1001M202.0 153.65H1001M202.0 150.90H1001M202.0 148.15H1001M202.0 145.40H1001M202.0 142.64H1001M202.0 139.89H1001M202.0 137.14H1001M202.0 134.38H1001M202.0 131.63H1001M202.0 128.88H1001M202.0 126.13H1001M202.0 123.37H1001M202.0 120.62H1001M202.0 117.87H1001M202.0 115.12H1001M202.0 112.36H1001M202.0 109.61H1001M202.0 106.86H1001M202.0 104.10H1001M202.0 101.35H1001M202.0 98.60H1001M202.0 95.85H1001M202.0 93.09H1001M202.0 90.34H1001M202.0 87.59H1001M202.0 84.84H1001M202.0 82.08H1001M202.0 79.33H1001" stroke="#d4d4d4" stroke-width="0.8" fill="none"/><path d="M202.0 506.00H994.8M202.0 483.42H994.8M202.0 470.22H994.8M202.0 460.85H994.8M202.0 453.58H994.8M202.0 447.64H994.8M202.0 442.62H994.8M202.0 438.27H994.8M202.0 434.43H994.8M202.0 431.00H994.8M202.0 408.42H994.8M202.0 395.22H994.8M202.0 385.85H994.8M202.0 378.58H994.8M202.0 372.64H994.8M202.0 367.62H994.8M202.0 363.27H994.8M202.0 359.43H994.8M202.0 356.00H994.8M202.0 333.42H994.8M202.0 320.22H994.8M202.0 310.85H994.8M202.0 303.58H994.8M202.0 297.64H994.8M202.0 292.62H994.8M202.0 288.27H994.8M202.0 284.43H994.8M202.0 281.00H994.8M202.0 258.42H994.8M202.0 245.22H994.8M202.0 235.85H994.8M202.0 228.58H994.8M202.0 222.64H994.8M202.0 217.62H994.8M202.0 213.27H994.8M202.0 209.43H994.8M202.0 206.00H994.8M202.0 183.42H994.8M202.0 170.22H994.8M202.0 160.85H994.8M202.0 153.58H994.8M202.0 147.64H994.8M202.0 142.62H994.8M202.0 138.27H994.8M202.0 134.43H994.8M202.0 131.00H994.8M202.0 108.42H994.8M202.0 95.22H994.8M202.0 85.85H994.8M202.0 78.58H994.8" stroke="#c0c0c0" stroke-width="1" fill="none"/><path d="M334.13 78.5V506.0M466.26 78.5V506.0M598.39 78.5V506.0M730.52 78.5V506.0M862.65 78.5V506.0" stroke="#c6c6c6" stroke-width="1.6" fill="none"/><rect x="202.0" y="78.5" width="792.8" height="427.5" fill="none" stroke="#c0c0c0" stroke-width="1"/><line x1="202.0" y1="78.5" x2="994.8" y2="78.5" stroke="#5e6c98" stroke-width="1.3"/><line x1="202.0" y1="97.2" x2="994.8" y2="97.2" stroke="#b87a62" stroke-width="1"/><line x1="202.0" y1="185.3" x2="994.8" y2="185.3" stroke="#a05a5a" stroke-width="1"/><line x1="202.0" y1="195.3" x2="994.8" y2="195.3" stroke="#5e6c98" stroke-width="1"/><line x1="202.0" y1="231.5" x2="994.8" y2="231.5" stroke="#6a8a50" stroke-width="1"/><line x1="202.0" y1="234.1" x2="994.8" y2="234.1" stroke="#5f8a45" stroke-width="1"/><line x1="202.0" y1="292" x2="994.8" y2="292" stroke="#5f6c9a" stroke-width="1.4"/><line x1="202.0" y1="456.4" x2="994.8" y2="456.4" stroke="#b87a62" stroke-width="1"/><polyline points="202.00,138.0 218.18,181.5 234.36,305.9 250.54,130.0 266.72,321.9 282.90,135.7 299.08,108.2 315.26,492.3 331.44,199.8 347.62,371.2 363.80,370.8 379.98,299.0 396.16,185.6 412.33,440.1 428.51,314.0 444.69,195.2 460.87,206.7 477.05,229.2 493.23,393.9 509.41,97.2 525.59,281.8 541.77,281.8 557.95,335.6 574.13,115.1 590.31,262.4 606.49,168.9 622.67,264.7 638.85,118.9 655.03,205.0 671.21,293.3 687.39,461.9 703.57,277.0 719.75,90.6 735.93,212.4 752.11,80.0 768.29,280.7 784.47,236.0 800.64,199.8 816.82,236.0 833.00,366.6 849.18,158.6 865.36,395.5 881.54,118.0 897.72,334.5 913.90,343.7 930.08,169.3 946.26,291.0 962.44,390.9 978.62,234.9 994.80,197.5" fill="none" stroke="#6c78a4" stroke-width="0.95" stroke-linejoin="miter"/><polyline points="202.00,246.3 218.18,233.7 234.36,188.3 250.54,94.5 266.72,141.4 282.90,218.0 299.08,294.4 315.26,166.6 331.44,194.5 347.62,206.0 363.80,104.1 379.98,124.9 396.16,185.6 412.33,104.1 428.51,223.4 444.69,118.5 460.87,384.0 477.05,281.0 493.23,187.2 509.41,140.3 525.59,262.4 541.77,120.8 557.95,435.1 574.13,201.0 590.31,381.8 606.49,472.9 622.67,460.0 638.85,437.9 655.03,196.2 671.21,495.1 687.39,396.6 703.57,450.5 719.75,407.0 735.93,311.6 752.11,137.3 768.29,472.2 784.47,180.8 800.64,438.3 816.82,121.5 833.00,285.0 849.18,472.2 865.36,407.6 881.54,452.7 897.72,218.0 913.90,385.0 930.08,491.7 946.26,329.9 962.44,477.9 978.62,206.0 994.80,178.0" fill="none" stroke="#6c78a4" stroke-width="0.95" stroke-linejoin="miter"/><polyline points="202.00,291.80 218.18,264.49 234.36,237.62 250.54,211.64 266.72,186.98 282.90,164.04 299.08,143.20 315.26,124.80 331.44,109.14 347.62,96.48 363.80,87.03 379.98,80.94 396.16,78.31 412.33,79.19 428.51,83.56 444.69,91.34 460.87,102.42 477.05,116.61 493.23,133.68 509.41,153.34 525.59,175.27 541.77,199.12 557.95,224.49 574.13,250.97 590.31,278.11 606.49,305.49 622.67,332.63 638.85,359.11 655.03,384.48 671.21,408.33 687.39,430.26 703.57,449.92 719.75,466.99 735.93,481.18 752.11,492.26 768.29,500.04 784.47,504.41 800.64,505.29 816.82,502.66 833.00,496.57 849.18,487.12 865.36,474.46 881.54,458.80 897.72,440.40 913.90,419.56 930.08,396.62 946.26,371.96 962.44,345.98 978.62,319.11 994.80,291.80" fill="none" stroke="#8a4040" stroke-width="1.7"/><circle cx="202.00" cy="291.80" r="2.35" fill="#000"/><circle cx="218.18" cy="264.49" r="2.35" fill="#000"/><circle cx="234.36" cy="237.62" r="2.35" fill="#000"/><circle cx="250.54" cy="211.64" r="2.35" fill="#000"/><circle cx="266.72" cy="186.98" r="2.35" fill="#000"/><circle cx="282.90" cy="164.04" r="2.35" fill="#000"/><circle cx="299.08" cy="143.20" r="2.35" fill="#000"/><circle cx="315.26" cy="124.80" r="2.35" fill="#000"/><circle cx="331.44" cy="109.14" r="2.35" fill="#000"/><circle cx="347.62" cy="96.48" r="2.35" fill="#000"/><circle cx="363.80" cy="87.03" r="2.35" fill="#000"/><circle cx="379.98" cy="80.94" r="2.35" fill="#000"/><circle cx="396.16" cy="78.31" r="2.35" fill="#000"/><circle cx="412.33" cy="79.19" r="2.35" fill="#000"/><circle cx="428.51" cy="83.56" r="2.35" fill="#000"/><circle cx="444.69" cy="91.34" r="2.35" fill="#000"/><circle cx="460.87" cy="102.42" r="2.35" fill="#000"/><circle cx="477.05" cy="116.61" r="2.35" fill="#000"/><circle cx="493.23" cy="133.68" r="2.35" fill="#000"/><circle cx="509.41" cy="153.34" r="2.35" fill="#000"/><circle cx="525.59" cy="175.27" r="2.35" fill="#000"/><circle cx="541.77" cy="199.12" r="2.35" fill="#000"/><circle cx="557.95" cy="224.49" r="2.35" fill="#000"/><circle cx="574.13" cy="250.97" r="2.35" fill="#000"/><circle cx="590.31" cy="278.11" r="2.35" fill="#000"/><circle cx="606.49" cy="305.49" r="2.35" fill="#000"/><circle cx="622.67" cy="332.63" r="2.35" fill="#000"/><circle cx="638.85" cy="359.11" r="2.35" fill="#000"/><circle cx="655.03" cy="384.48" r="2.35" fill="#000"/><circle cx="671.21" cy="408.33" r="2.35" fill="#000"/><circle cx="687.39" cy="430.26" r="2.35" fill="#000"/><circle cx="703.57" cy="449.92" r="2.35" fill="#000"/><circle cx="719.75" cy="466.99" r="2.35" fill="#000"/><circle cx="735.93" cy="481.18" r="2.35" fill="#000"/><circle cx="752.11" cy="492.26" r="2.35" fill="#000"/><circle cx="768.29" cy="500.04" r="2.35" fill="#000"/><circle cx="784.47" cy="504.41" r="2.35" fill="#000"/><circle cx="800.64" cy="505.29" r="2.35" fill="#000"/><circle cx="816.82" cy="502.66" r="2.35" fill="#000"/><circle cx="833.00" cy="496.57" r="2.35" fill="#000"/><circle cx="849.18" cy="487.12" r="2.35" fill="#000"/><circle cx="865.36" cy="474.46" r="2.35" fill="#000"/><circle cx="881.54" cy="458.80" r="2.35" fill="#000"/><circle cx="897.72" cy="440.40" r="2.35" fill="#000"/><circle cx="913.90" cy="419.56" r="2.35" fill="#000"/><circle cx="930.08" cy="396.62" r="2.35" fill="#000"/><circle cx="946.26" cy="371.96" r="2.35" fill="#000"/><circle cx="962.44" cy="345.98" r="2.35" fill="#000"/><circle cx="978.62" cy="319.11" r="2.35" fill="#000"/><circle cx="994.80" cy="291.80" r="2.35" fill="#000"/><polygon points="195.5,69 203,69 199.25,74" fill="#3c4654"/></svg>
<div class="t" style="left:194.06px;top:127.17px;font-size:7.6px;color:#404040;transform:scaleX(0.880);transform-origin:0 0;">10</div>
<div class="t" style="left:197.78px;top:202.17px;font-size:7.6px;color:#404040;transform:scaleX(0.880);transform-origin:0 0;">1</div>
<div class="t" style="left:197.78px;top:277.17px;font-size:7.6px;color:#404040;transform:scaleX(0.880);transform-origin:0 0;">0</div>
<div class="t" style="left:197.78px;top:352.17px;font-size:7.6px;color:#404040;transform:scaleX(0.880);transform-origin:0 0;">0</div>
<div class="t" style="left:197.78px;top:427.17px;font-size:7.6px;color:#404040;transform:scaleX(0.880);transform-origin:0 0;">0</div>
<div class="t" style="left:201.60px;top:505.95px;font-size:7.5px;color:#3a3a3a;transform:scaleX(0.850);transform-origin:0 0;">-0</div>
<div class="t" style="left:333.73px;top:505.95px;font-size:7.5px;color:#3a3a3a;transform:scaleX(0.850);transform-origin:0 0;">5</div>
<div class="t" style="left:465.86px;top:505.95px;font-size:7.5px;color:#3a3a3a;transform:scaleX(0.850);transform-origin:0 0;">10</div>
<div class="t" style="left:597.99px;top:505.95px;font-size:7.5px;color:#3a3a3a;transform:scaleX(0.850);transform-origin:0 0;">15</div>
<div class="t" style="left:730.12px;top:505.95px;font-size:7.5px;color:#3a3a3a;transform:scaleX(0.850);transform-origin:0 0;">20</div>
<div class="t" style="left:862.25px;top:505.95px;font-size:7.5px;color:#3a3a3a;transform:scaleX(0.850);transform-origin:0 0;">25</div>
<div class="t" style="left:994.38px;top:505.95px;font-size:7.5px;color:#3a3a3a;transform:scaleX(0.850);transform-origin:0 0;">30</div>
<div class="a" style="left:172.00px;top:520.00px;width:844.00px;height:114.00px;background:#7a7a7a"></div>
<div class="a" style="left:174.00px;top:520.00px;width:842.00px;height:2.00px;background:#575757"></div>
<div class="a" style="left:172.00px;top:520.00px;width:2.00px;height:114.00px;background:#5e5e5e"></div>
<div class="a" style="left:177.20px;top:523.70px;width:69.20px;height:10.40px;background:#36457a;border:1px solid #a4a4a4;border-radius:2.5px"></div>
<div class="t b" style="left:205.02px;top:525.43px;font-size:8.0px;color:#f2f2f2;transform:scaleX(0.885);transform-origin:0 0;">Delay 1 Left</div>
<svg style="left:256.60px;top:525.90px" width="20" height="8"><polygon points="0,0 4.8,3.1 0,6.2" fill="#22e622"/><line x1="8.3" y1="-0.4" x2="8.3" y2="6.6" stroke="#5e5e5e" stroke-width="1.2"/><circle cx="15" cy="3.1" r="2.75" fill="#6c0a0a"/></svg>
<div class="a" style="left:282.00px;top:524.00px;width:231.40px;height:8.50px;background:linear-gradient(#45484f,#36457a 75%);border:1.3px solid #b0b0b0;border-radius:4.5px"></div>
<div class="a" style="left:430.60px;top:523.20px;width:14.00px;height:10.50px;background:linear-gradient(90deg,#464a56,#36457a);border:1px solid #959595;border-radius:3px"></div>
<div class="a" style="left:521.00px;top:523.40px;width:69.50px;height:10.50px;background:#36457a;border:1px solid #a8a8a8;border-radius:2.5px"></div>
<svg style="left:525.40px;top:526.60px" width="6" height="6"><polygon points="0,0 4.6,2.5 0,5" fill="#fff"/></svg>
<div class="t b" style="left:573.70px;top:525.67px;font-size:7.6px;color:#e8e8e8;font-style:italic;transform:scaleX(0.850);transform-origin:0 0;">sec</div>
<div class="t" style="left:556.04px;top:525.50px;font-size:7.8px;color:#f6f6f6;font-weight:bold;transform:scaleX(0.900);transform-origin:0 0;">0.26</div>
<div class="a" style="left:177.20px;top:537.70px;width:69.20px;height:10.40px;background:#36457a;border:1px solid #a4a4a4;border-radius:2.5px"></div>
<div class="t b" style="left:200.30px;top:539.43px;font-size:8.0px;color:#f2f2f2;transform:scaleX(0.885);transform-origin:0 0;">Delay 1 Right</div>
<svg style="left:256.60px;top:539.90px" width="20" height="8"><polygon points="0,0 4.8,3.1 0,6.2" fill="#22e622"/><line x1="8.3" y1="-0.4" x2="8.3" y2="6.6" stroke="#5e5e5e" stroke-width="1.2"/><circle cx="15" cy="3.1" r="2.75" fill="#6c0a0a"/></svg>
<div class="a" style="left:282.00px;top:538.00px;width:231.40px;height:8.50px;background:linear-gradient(#45484f,#36457a 75%);border:1.3px solid #b0b0b0;border-radius:4.5px"></div>
<div class="a" style="left:428.70px;top:537.20px;width:14.00px;height:10.50px;background:linear-gradient(90deg,#464a56,#36457a);border:1px solid #959595;border-radius:3px"></div>
<div class="a" style="left:521.00px;top:537.40px;width:69.50px;height:10.50px;background:#36457a;border:1px solid #a8a8a8;border-radius:2.5px"></div>
<svg style="left:525.40px;top:540.60px" width="6" height="6"><polygon points="0,0 4.6,2.5 0,5" fill="#fff"/></svg>
<div class="t b" style="left:573.70px;top:539.67px;font-size:7.6px;color:#e8e8e8;font-style:italic;transform:scaleX(0.850);transform-origin:0 0;">sec</div>
<div class="t" style="left:556.04px;top:539.50px;font-size:7.8px;color:#f6f6f6;font-weight:bold;transform:scaleX(0.900);transform-origin:0 0;">0.25</div>
<div class="a" style="left:177.20px;top:551.70px;width:69.20px;height:10.40px;background:#36457a;border:1px solid #a4a4a4;border-radius:2.5px"></div>
<div class="t b" style="left:185.74px;top:553.43px;font-size:8.0px;color:#f2f2f2;transform:scaleX(0.885);transform-origin:0 0;">Delay 1 Feedback</div>
<svg style="left:256.60px;top:553.90px" width="20" height="8"><polygon points="0,0 4.8,3.1 0,6.2" fill="#177017"/><line x1="8.3" y1="-0.4" x2="8.3" y2="6.6" stroke="#5e5e5e" stroke-width="1.2"/><circle cx="15" cy="3.1" r="2.75" fill="#6c0a0a"/></svg>
<div class="a" style="left:282.00px;top:552.00px;width:231.40px;height:8.50px;background:linear-gradient(#45484f,#36457a 75%);border:1.3px solid #b0b0b0;border-radius:4.5px"></div>
<div class="a" style="left:390.80px;top:551.20px;width:14.00px;height:10.50px;background:linear-gradient(90deg,#464a56,#36457a);border:1px solid #959595;border-radius:3px"></div>
<div class="a" style="left:521.00px;top:551.40px;width:69.50px;height:10.50px;background:#36457a;border:1px solid #a8a8a8;border-radius:2.5px"></div>
<svg style="left:525.40px;top:554.60px" width="6" height="6"><polygon points="0,0 4.6,2.5 0,5" fill="#fff"/></svg>
<div class="t b" style="left:573.70px;top:553.67px;font-size:7.6px;color:#e8e8e8;font-style:italic;transform:scaleX(0.850);transform-origin:0 0;">x</div>
<div class="t" style="left:559.94px;top:553.50px;font-size:7.8px;color:#f6f6f6;font-weight:bold;transform:scaleX(0.900);transform-origin:0 0;">0.5</div>
<div class="a" style="left:177.20px;top:565.70px;width:69.20px;height:10.40px;background:#36457a;border:1px solid #a4a4a4;border-radius:2.5px"></div>
<div class="t b" style="left:205.82px;top:567.43px;font-size:8.0px;color:#f2f2f2;transform:scaleX(0.885);transform-origin:0 0;">Delay 1 Mix</div>
<svg style="left:256.60px;top:567.90px" width="20" height="8"><polygon points="0,0 4.8,3.1 0,6.2" fill="#177017"/><line x1="8.3" y1="-0.4" x2="8.3" y2="6.6" stroke="#5e5e5e" stroke-width="1.2"/><circle cx="15" cy="3.1" r="2.75" fill="#6c0a0a"/></svg>
<div class="a" style="left:282.00px;top:566.00px;width:231.40px;height:8.50px;background:linear-gradient(#45484f,#36457a 75%);border:1.3px solid #b0b0b0;border-radius:4.5px"></div>
<div class="a" style="left:439.70px;top:565.20px;width:14.00px;height:10.50px;background:linear-gradient(90deg,#464a56,#36457a);border:1px solid #959595;border-radius:3px"></div>
<div class="a" style="left:521.00px;top:565.40px;width:69.50px;height:10.50px;background:#36457a;border:1px solid #a8a8a8;border-radius:2.5px"></div>
<svg style="left:525.40px;top:568.60px" width="6" height="6"><polygon points="0,0 4.6,2.5 0,5" fill="#fff"/></svg>
<div class="t b" style="left:573.70px;top:567.67px;font-size:7.6px;color:#e8e8e8;font-style:italic;transform:scaleX(0.850);transform-origin:0 0;">dB</div>
<div class="t" style="left:559.94px;top:567.50px;font-size:7.8px;color:#f6f6f6;font-weight:bold;transform:scaleX(0.900);transform-origin:0 0;">0.0</div>
<div class="a" style="left:177.20px;top:579.70px;width:69.20px;height:10.40px;background:#742a31;border:1px solid #a4a4a4;border-radius:2.5px"></div>
<div class="t b" style="left:211.32px;top:581.43px;font-size:8.0px;color:#f2f2f2;transform:scaleX(0.885);transform-origin:0 0;">Jitter Amp</div>
<svg style="left:256.60px;top:581.90px" width="20" height="8"><polygon points="0,0 4.8,3.1 0,6.2" fill="#177017"/><line x1="8.3" y1="-0.4" x2="8.3" y2="6.6" stroke="#5e5e5e" stroke-width="1.2"/><circle cx="15" cy="3.1" r="2.75" fill="#6c0a0a"/></svg>
<div class="a" style="left:282.00px;top:580.00px;width:231.40px;height:8.50px;background:linear-gradient(#45484f,#742a31 75%);border:1.3px solid #b0b0b0;border-radius:4.5px"></div>
<div class="a" style="left:444.60px;top:579.20px;width:14.00px;height:10.50px;background:linear-gradient(90deg,#464a56,#742a31);border:1px solid #959595;border-radius:3px"></div>
<div class="a" style="left:521.00px;top:579.40px;width:69.50px;height:10.50px;background:#742a31;border:1px solid #a8a8a8;border-radius:2.5px"></div>
<svg style="left:525.40px;top:582.60px" width="6" height="6"><polygon points="0,0 4.6,2.5 0,5" fill="#fff"/></svg>
<div class="t b" style="left:573.70px;top:581.67px;font-size:7.6px;color:#e8e8e8;font-style:italic;transform:scaleX(0.850);transform-origin:0 0;">x</div>
<div class="t" style="left:559.94px;top:581.50px;font-size:7.8px;color:#f6f6f6;font-weight:bold;transform:scaleX(0.900);transform-origin:0 0;">0.1</div>
<div class="a" style="left:597.60px;top:523.70px;width:69.20px;height:10.40px;background:#2d5c1f;border:1px solid #a4a4a4;border-radius:2.5px"></div>
<div class="t b" style="left:625.42px;top:525.43px;font-size:8.0px;color:#f2f2f2;transform:scaleX(0.885);transform-origin:0 0;">Delay 2 Left</div>
<svg style="left:677.00px;top:525.90px" width="20" height="8"><polygon points="0,0 4.8,3.1 0,6.2" fill="#177017"/><line x1="8.3" y1="-0.4" x2="8.3" y2="6.6" stroke="#5e5e5e" stroke-width="1.2"/><circle cx="15" cy="3.1" r="2.75" fill="#6c0a0a"/></svg>
<div class="a" style="left:702.70px;top:524.00px;width:230.80px;height:8.50px;background:linear-gradient(#45484f,#34552a 75%);border:1.3px solid #b0b0b0;border-radius:4.5px"></div>
<div class="a" style="left:841.40px;top:523.20px;width:14.00px;height:10.50px;background:linear-gradient(90deg,#464a56,#34552a);border:1px solid #959595;border-radius:3px"></div>
<div class="a" style="left:941.50px;top:523.40px;width:69.30px;height:10.50px;background:#2d5c1f;border:1px solid #a8a8a8;border-radius:2.5px"></div>
<svg style="left:945.90px;top:526.60px" width="6" height="6"><polygon points="0,0 4.6,2.5 0,5" fill="#fff"/></svg>
<div class="t b" style="left:994.00px;top:525.67px;font-size:7.6px;color:#e8e8e8;font-style:italic;transform:scaleX(0.850);transform-origin:0 0;">sec</div>
<div class="t" style="left:976.34px;top:525.50px;font-size:7.8px;color:#f6f6f6;font-weight:bold;transform:scaleX(0.900);transform-origin:0 0;">0.16</div>
<div class="a" style="left:597.60px;top:537.70px;width:69.20px;height:10.40px;background:#2d5c1f;border:1px solid #a4a4a4;border-radius:2.5px"></div>
<div class="t b" style="left:620.70px;top:539.43px;font-size:8.0px;color:#f2f2f2;transform:scaleX(0.885);transform-origin:0 0;">Delay 2 Right</div>
<svg style="left:677.00px;top:539.90px" width="20" height="8"><polygon points="0,0 4.8,3.1 0,6.2" fill="#177017"/><line x1="8.3" y1="-0.4" x2="8.3" y2="6.6" stroke="#5e5e5e" stroke-width="1.2"/><circle cx="15" cy="3.1" r="2.75" fill="#6c0a0a"/></svg>
<div class="a" style="left:702.70px;top:538.00px;width:230.80px;height:8.50px;background:linear-gradient(#45484f,#34552a 75%);border:1.3px solid #b0b0b0;border-radius:4.5px"></div>
<div class="a" style="left:837.00px;top:537.20px;width:14.00px;height:10.50px;background:linear-gradient(90deg,#464a56,#34552a);border:1px solid #959595;border-radius:3px"></div>
<div class="a" style="left:941.50px;top:537.40px;width:69.30px;height:10.50px;background:#2d5c1f;border:1px solid #a8a8a8;border-radius:2.5px"></div>
<svg style="left:945.90px;top:540.60px" width="6" height="6"><polygon points="0,0 4.6,2.5 0,5" fill="#fff"/></svg>
<div class="t b" style="left:994.00px;top:539.67px;font-size:7.6px;color:#e8e8e8;font-style:italic;transform:scaleX(0.850);transform-origin:0 0;">sec</div>
<div class="t" style="left:976.34px;top:539.50px;font-size:7.8px;color:#f6f6f6;font-weight:bold;transform:scaleX(0.900);transform-origin:0 0;">0.15</div>
<div class="a" style="left:597.60px;top:551.70px;width:69.20px;height:10.40px;background:#2d5c1f;border:1px solid #a4a4a4;border-radius:2.5px"></div>
<div class="t b" style="left:606.14px;top:553.43px;font-size:8.0px;color:#f2f2f2;transform:scaleX(0.885);transform-origin:0 0;">Delay 2 Feedback</div>
<svg style="left:677.00px;top:553.90px" width="20" height="8"><polygon points="0,0 4.8,3.1 0,6.2" fill="#177017"/><line x1="8.3" y1="-0.4" x2="8.3" y2="6.6" stroke="#5e5e5e" stroke-width="1.2"/><circle cx="15" cy="3.1" r="2.75" fill="#6c0a0a"/></svg>
<div class="a" style="left:702.70px;top:552.00px;width:230.80px;height:8.50px;background:linear-gradient(#45484f,#34552a 75%);border:1.3px solid #b0b0b0;border-radius:4.5px"></div>
<div class="a" style="left:810.50px;top:551.20px;width:14.00px;height:10.50px;background:linear-gradient(90deg,#464a56,#34552a);border:1px solid #959595;border-radius:3px"></div>
<div class="a" style="left:941.50px;top:551.40px;width:69.30px;height:10.50px;background:#2d5c1f;border:1px solid #a8a8a8;border-radius:2.5px"></div>
<svg style="left:945.90px;top:554.60px" width="6" height="6"><polygon points="0,0 4.6,2.5 0,5" fill="#fff"/></svg>
<div class="t b" style="left:994.00px;top:553.67px;font-size:7.6px;color:#e8e8e8;font-style:italic;transform:scaleX(0.850);transform-origin:0 0;">x</div>
<div class="t" style="left:980.24px;top:553.50px;font-size:7.8px;color:#f6f6f6;font-weight:bold;transform:scaleX(0.900);transform-origin:0 0;">0.5</div>
<div class="a" style="left:597.60px;top:565.70px;width:69.20px;height:10.40px;background:#2d5c1f;border:1px solid #a4a4a4;border-radius:2.5px"></div>
<div class="t b" style="left:626.22px;top:567.43px;font-size:8.0px;color:#f2f2f2;transform:scaleX(0.885);transform-origin:0 0;">Delay 2 Mix</div>
<svg style="left:677.00px;top:567.90px" width="20" height="8"><polygon points="0,0 4.8,3.1 0,6.2" fill="#177017"/><line x1="8.3" y1="-0.4" x2="8.3" y2="6.6" stroke="#5e5e5e" stroke-width="1.2"/><circle cx="15" cy="3.1" r="2.75" fill="#6c0a0a"/></svg>
<div class="a" style="left:702.70px;top:566.00px;width:230.80px;height:8.50px;background:linear-gradient(#45484f,#34552a 75%);border:1.3px solid #b0b0b0;border-radius:4.5px"></div>
<div class="a" style="left:859.70px;top:565.20px;width:14.00px;height:10.50px;background:linear-gradient(90deg,#464a56,#34552a);border:1px solid #959595;border-radius:3px"></div>
<div class="a" style="left:941.50px;top:565.40px;width:69.30px;height:10.50px;background:#2d5c1f;border:1px solid #a8a8a8;border-radius:2.5px"></div>
<svg style="left:945.90px;top:568.60px" width="6" height="6"><polygon points="0,0 4.6,2.5 0,5" fill="#fff"/></svg>
<div class="t b" style="left:994.00px;top:567.67px;font-size:7.6px;color:#e8e8e8;font-style:italic;transform:scaleX(0.850);transform-origin:0 0;">dB</div>
<div class="t" style="left:980.24px;top:567.50px;font-size:7.8px;color:#f6f6f6;font-weight:bold;transform:scaleX(0.900);transform-origin:0 0;">0.0</div>
<div class="a" style="left:597.60px;top:579.70px;width:69.20px;height:10.40px;background:#742a31;border:1px solid #a4a4a4;border-radius:2.5px"></div>
<div class="t b" style="left:625.42px;top:581.43px;font-size:8.0px;color:#f2f2f2;transform:scaleX(0.885);transform-origin:0 0;">Jitter Speed</div>
<svg style="left:677.00px;top:581.90px" width="20" height="8"><polygon points="0,0 4.8,3.1 0,6.2" fill="#22e622"/><line x1="8.3" y1="-0.4" x2="8.3" y2="6.6" stroke="#5e5e5e" stroke-width="1.2"/><circle cx="15" cy="3.1" r="2.75" fill="#6c0a0a"/></svg>
<div class="a" style="left:702.70px;top:580.00px;width:230.80px;height:8.50px;background:linear-gradient(#45484f,#742a31 75%);border:1.3px solid #b0b0b0;border-radius:4.5px"></div>
<div class="a" style="left:796.90px;top:579.20px;width:14.00px;height:10.50px;background:linear-gradient(90deg,#464a56,#742a31);border:1px solid #959595;border-radius:3px"></div>
<div class="a" style="left:941.50px;top:579.40px;width:69.30px;height:10.50px;background:#742a31;border:1px solid #a8a8a8;border-radius:2.5px"></div>
<svg style="left:945.90px;top:582.60px" width="6" height="6"><polygon points="0,0 4.6,2.5 0,5" fill="#fff"/></svg>
<div class="t b" style="left:994.00px;top:581.67px;font-size:7.6px;color:#e8e8e8;font-style:italic;transform:scaleX(0.850);transform-origin:0 0;">Hz</div>
<div class="t" style="left:976.34px;top:581.50px;font-size:7.8px;color:#f6f6f6;font-weight:bold;transform:scaleX(0.900);transform-origin:0 0;">0.03</div>
<div class="a" style="left:177.20px;top:593.70px;width:69.20px;height:10.40px;background:#9d6047;border:1px solid #a4a4a4;border-radius:2.5px"></div>
<div class="t b" style="left:210.55px;top:595.43px;font-size:8.0px;color:#f2f2f2;transform:scaleX(0.885);transform-origin:0 0;">Filter Freq</div>
<svg style="left:256.60px;top:595.90px" width="20" height="8"><polygon points="0,0 4.8,3.1 0,6.2" fill="#177017"/><line x1="8.3" y1="-0.4" x2="8.3" y2="6.6" stroke="#5e5e5e" stroke-width="1.2"/><circle cx="15" cy="3.1" r="2.75" fill="#6c0a0a"/></svg>
<div class="a" style="left:282.00px;top:594.00px;width:638.00px;height:8.50px;background:linear-gradient(#45484f,#8e553e 75%);border:1.3px solid #b0b0b0;border-radius:4.5px"></div>
<div class="a" style="left:873.30px;top:593.20px;width:18.50px;height:10.50px;background:linear-gradient(90deg,#464a56,#8e553e);border:1px solid #959595;border-radius:3px"></div>
<div class="a" style="left:927.00px;top:593.40px;width:83.80px;height:10.50px;background:#9d6047;border:1px solid #a8a8a8;border-radius:2.5px"></div>
<svg style="left:931.40px;top:596.60px" width="6" height="6"><polygon points="0,0 4.6,2.5 0,5" fill="#fff"/></svg>
<div class="t b" style="left:994.00px;top:595.67px;font-size:7.6px;color:#e8e8e8;font-style:italic;transform:scaleX(0.850);transform-origin:0 0;">Hz</div>
<div class="t" style="left:964.63px;top:595.50px;font-size:7.8px;color:#f6f6f6;font-weight:bold;transform:scaleX(0.900);transform-origin:0 0;">15000.0</div>
<div class="a" style="left:177.20px;top:607.70px;width:69.20px;height:10.40px;background:#9d6047;border:1px solid #a4a4a4;border-radius:2.5px"></div>
<div class="t b" style="left:219.59px;top:609.43px;font-size:8.0px;color:#f2f2f2;transform:scaleX(0.885);transform-origin:0 0;">Filter Q</div>
<svg style="left:256.60px;top:609.90px" width="20" height="8"><polygon points="0,0 4.8,3.1 0,6.2" fill="#177017"/><line x1="8.3" y1="-0.4" x2="8.3" y2="6.6" stroke="#5e5e5e" stroke-width="1.2"/><circle cx="15" cy="3.1" r="2.75" fill="#6c0a0a"/></svg>
<div class="a" style="left:282.00px;top:608.00px;width:638.00px;height:8.50px;background:linear-gradient(#45484f,#8e553e 75%);border:1.3px solid #b0b0b0;border-radius:4.5px"></div>
<div class="a" style="left:354.40px;top:607.20px;width:18.50px;height:10.50px;background:linear-gradient(90deg,#464a56,#8e553e);border:1px solid #959595;border-radius:3px"></div>
<div class="a" style="left:927.00px;top:607.40px;width:83.80px;height:10.50px;background:#9d6047;border:1px solid #a8a8a8;border-radius:2.5px"></div>
<svg style="left:931.40px;top:610.60px" width="6" height="6"><polygon points="0,0 4.6,2.5 0,5" fill="#fff"/></svg>
<div class="t b" style="left:994.00px;top:609.67px;font-size:7.6px;color:#e8e8e8;font-style:italic;transform:scaleX(0.850);transform-origin:0 0;">Q</div>
<div class="t" style="left:972.43px;top:609.50px;font-size:7.8px;color:#f6f6f6;font-weight:bold;transform:scaleX(0.900);transform-origin:0 0;">0.707</div>
<div class="a" style="left:177.20px;top:621.70px;width:69.20px;height:10.40px;background:#36457a;border:1px solid #a4a4a4;border-radius:2.5px"></div>
<div class="t b" style="left:213.43px;top:623.43px;font-size:8.0px;color:#f2f2f2;transform:scaleX(0.885);transform-origin:0 0;">Dry / Wet</div>
<svg style="left:256.60px;top:623.90px" width="20" height="8"><polygon points="0,0 4.8,3.1 0,6.2" fill="#177017"/><line x1="8.3" y1="-0.4" x2="8.3" y2="6.6" stroke="#5e5e5e" stroke-width="1.2"/><circle cx="15" cy="3.1" r="2.75" fill="#6c0a0a"/></svg>
<div class="a" style="left:282.00px;top:622.00px;width:638.00px;height:8.50px;background:linear-gradient(#45484f,#36457a 75%);border:1.3px solid #b0b0b0;border-radius:4.5px"></div>
<div class="a" style="left:900.70px;top:621.20px;width:18.50px;height:10.50px;background:linear-gradient(90deg,#464a56,#36457a);border:1px solid #959595;border-radius:3px"></div>
<div class="a" style="left:927.00px;top:621.40px;width:83.80px;height:10.50px;background:#36457a;border:1px solid #a8a8a8;border-radius:2.5px"></div>
<svg style="left:931.40px;top:624.60px" width="6" height="6"><polygon points="0,0 4.6,2.5 0,5" fill="#fff"/></svg>
<div class="t b" style="left:994.00px;top:623.67px;font-size:7.6px;color:#e8e8e8;font-style:italic;transform:scaleX(0.850);transform-origin:0 0;">x</div>
<div class="t" style="left:980.24px;top:623.50px;font-size:7.8px;color:#f6f6f6;font-weight:bold;transform:scaleX(0.900);transform-origin:0 0;">1.0</div>
<svg style="left:1003px;top:622px" width="13" height="12"><path d="M12 4L4 12M12 7.5L7.5 12M12 11L11 12" stroke="#b8b8b8" stroke-width="0.9"/><path d="M12 5L5 12M12 8.5L8.5 12" stroke="#5a5a5a" stroke-width="0.8"/></svg>
<div class="a" style="left:1015.00px;top:35.00px;width:1.00px;height:599.00px;background:#4a4a4a"></div>
<div class="a" style="left:180.80px;top:48.30px;width:104.60px;height:13.70px;background:#6e2a31;border:1px solid #9a8a8a;border-radius:3px"></div>
<div class="t" style="left:183.30px;top:51.38px;font-size:9px;color:#fff;transform:scaleX(0.920);transform-origin:0 0;">Jitter Speed</div>
<svg style="left:275.90px;top:51.65px" width="7" height="7"><polygon points="5.8,0.8 5.8,6.2 0.6,3.5" fill="#fff"/></svg>
<svg style="left:288px;top:48px" width="60" height="16">
<rect x="4.2" y="3.6" width="8.2" height="7.9" rx="1" fill="#cfcfcf"/><rect x="6.3" y="3.6" width="1.3" height="2.6" fill="#555"/><rect x="8.9" y="3.6" width="1.3" height="2.6" fill="#555"/><rect x="7.2" y="7.3" width="2.3" height="2.6" fill="#333"/>
<line x1="15.5" y1="1.8" x2="15.5" y2="13.3" stroke="#d6d6d6" stroke-width="0.9"/>
<path d="M17.9 11.4V5.4q0-1.2 1.2-1.2h2.8l1 1h3.2q1.2 0 1.2 1.2v5z" fill="none" stroke="#d6d6d6" stroke-width="1"/><rect x="18.4" y="7.6" width="8.2" height="3.6" fill="#3a3a3a"/><line x1="17.9" y1="7.2" x2="26.9" y2="7.2" stroke="#d6d6d6" stroke-width="0.9"/>
<line x1="29.6" y1="1.8" x2="29.6" y2="13.3" stroke="#d6d6d6" stroke-width="0.9"/>
<path d="M34.2 5.6q2-2.4 4.6-1.6q2.6 1.2 2.4 3.8q-0.4 3-3.6 3.8" fill="none" stroke="#d6d6d6" stroke-width="1.2"/><polygon points="31.2,7.8 35.6,4.2 35.4,9.6" fill="#d6d6d6"/>
<line x1="43.6" y1="1.8" x2="43.6" y2="13.3" stroke="#d6d6d6" stroke-width="0.9"/>
<path d="M46.2 7.4q4.8-5.4 9.6 0q-4.8 5.4-9.6 0z" fill="none" stroke="#d6d6d6" stroke-width="1.1"/><circle cx="51" cy="7.4" r="1.3" fill="#d6d6d6"/>
</svg>
<svg style="left:852px;top:46px" width="160" height="18">
<polygon points="5.9,4.6 12.9,8.2 11,9.6 14.8,13.4 13.3,14.9 9.6,11.1 7.9,12.6" fill="#d42828"/>
<line x1="19.5" y1="3.5" x2="19.5" y2="15.6" stroke="#d6d6d6" stroke-width="1"/>
<path d="M23.6 7.3l2.2-2.2 6.6 6.6 0.6 3-3 -0.6z" fill="none" stroke="#d6d6d6" stroke-width="1"/><path d="M32.4 11.7l0.6 3-3-0.6z" fill="#fff"/>
<line x1="37.3" y1="3.5" x2="37.3" y2="15.6" stroke="#d6d6d6" stroke-width="1.2"/>
<circle cx="44.4" cy="8.9" r="3.4" fill="none" stroke="#d6d6d6" stroke-width="1.3"/><line x1="46.9" y1="11.4" x2="50.4" y2="14.6" stroke="#d6d6d6" stroke-width="1.8"/>
<line x1="54.5" y1="3.5" x2="54.5" y2="15.6" stroke="#d6d6d6" stroke-width="1"/>
<path d="M61 14.8L58.6 11.6Q58 10.4 59.1 10.1L60.3 11.1L59.5 7.4Q59.6 6.5 60.3 6.5Q61 6.5 61.1 7.3L61.6 9.6L61.8 5.8Q61.9 5 62.6 5Q63.3 5 63.4 5.8L63.6 9.4L64 6.2Q64.1 5.4 64.8 5.4Q65.6 5.5 65.6 6.2L65.6 9.6L66 8.1Q66.2 7.4 66.8 7.4Q67.6 7.5 67.5 8.3L67.2 12.2Q66.9 14.8 65.6 14.8Z" fill="none" stroke="#d6d6d6" stroke-width="0.95" stroke-linejoin="round"/>
<path d="M89.6 11.8l1-5.5 0.8 6.8 1.2-7.6 1.1 5.4 1.3-5.9 1.6 7.2 1.2-4 1.4 0.4" fill="none" stroke="#d6d6d6" stroke-width="1.05"/>
<polygon points="102.6,13.4 104.8,13.4 103.7,15.6" fill="#bbb"/>
<line x1="107.2" y1="3.7" x2="107.2" y2="15.4" stroke="#d6d6d6" stroke-width="1.1"/>
<path d="M111.1 4v9M111.1 8.4h11.6M112.6 8.4q0.4-3.6 2.6-3.8q2.2 0 2.6 3.8q0.6 3.4 2.5 3.4q2-0.2 2.5-3.4" fill="none" stroke="#d6d6d6" stroke-width="1"/>
<polygon points="124.1,13.4 126.3,13.4 125.2,15.6" fill="#bbb"/>
<line x1="128.2" y1="3.7" x2="128.2" y2="15.4" stroke="#d6d6d6" stroke-width="1.1"/>
<circle cx="137.3" cy="9.5" r="3.9" fill="none" stroke="#fff" stroke-width="3.2" stroke-dasharray="1.7 1.36"/>
<circle cx="137.3" cy="9.5" r="3.1" fill="none" stroke="#fff" stroke-width="2.4"/>
<polygon points="144.4,13.8 146.6,13.8 145.5,16" fill="#bbb"/>
</svg>
<div class="a" style="left:1004.90px;top:38.30px;width:6.80px;height:6.50px;border:1px solid #e0e0e0;border-top-width:2.2px;background:#333"></div>
</body></html>
